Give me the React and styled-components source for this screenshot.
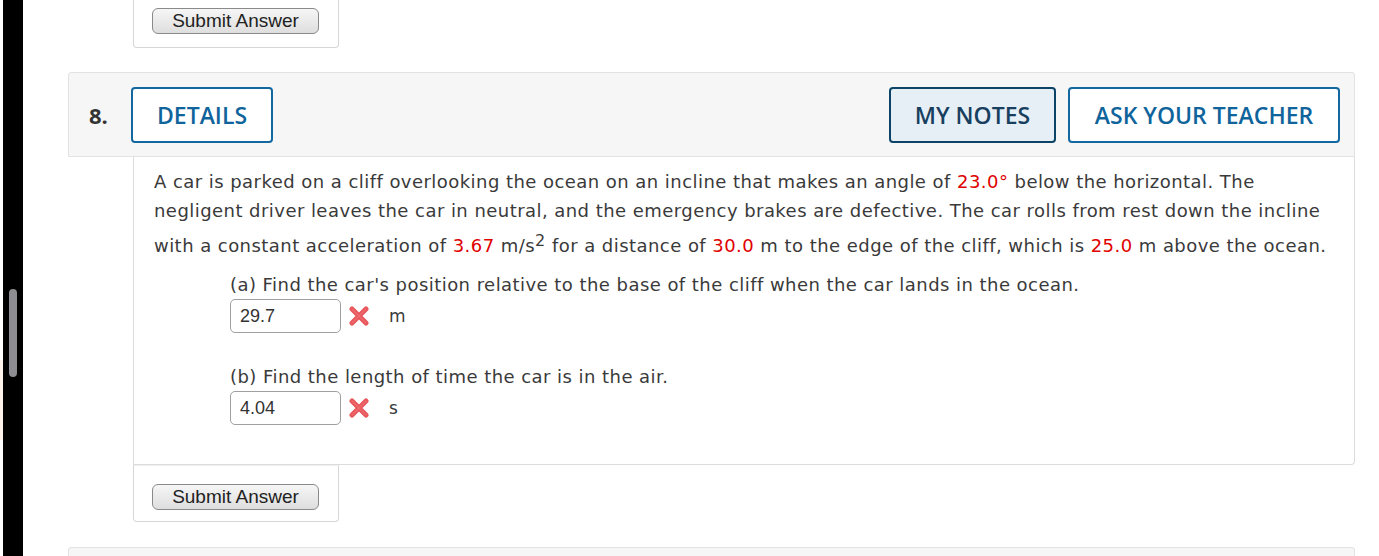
import React from "react";
import styled, { createGlobalStyle } from "styled-components";

const Global = createGlobalStyle`
  html, body { margin: 0; padding: 0; background: #fff; }
  body { overflow: hidden; }
`;

const Page = styled.div`
  display: flex;
  height: 556px;
  overflow: hidden;
`;

const Edge = styled.div`
  width: 3px;
  flex: none;
  background: linear-gradient(#fff 0, #fff 360px, #fdf3ea 360px, #fdf3ea 440px, #fff 440px);
`;

const Strip = styled.div`
  width: 20px;
  flex: none;
  background: #000;
  display: flex;
  flex-direction: column;
  align-items: center;
  padding-top: 289px;
  box-sizing: border-box;
`;

const Thumb = styled.div`
  width: 8px;
  height: 88px;
  border-radius: 4px;
  background: #8e8d92;
`;

const Main = styled.div`
  flex: 1;
  padding-left: 45px;
  padding-right: 24px;
  display: flex;
  flex-direction: column;
`;

const Inset = styled.div`
  padding-left: 65px;
`;

const SubmitCard = styled.div`
  width: 206px;
  box-sizing: border-box;
  border: 1px solid #d6d6d6;
  border-top: ${(p) => (p.$top ? "1px solid #f0f0f0" : "none")};
  border-radius: 0 0 4px 4px;
  padding: ${(p) => (p.$top ? "18px 0 11px 18px" : "8px 0 13px 18px")};
  background: #fff;
`;

const SubmitButton = styled.button`
  width: 167px;
  height: 26px;
  box-sizing: border-box;
  border: 1px solid #8a8a8a;
  border-radius: 6px;
  background: linear-gradient(#f6f6f6, #dedede);
  font-family: "Liberation Sans", Arial, sans-serif;
  font-size: 19px;
  color: #222;
  padding: 0;
  line-height: 22px;
`;

const Question = styled.div`
  margin-top: 24px;
`;

const Header = styled.div`
  display: flex;
  align-items: center;
  background: #f6f6f6;
  border: 1px solid #e2e2e2;
  border-radius: 3px 3px 0 0;
  padding: 14px 14px 13px 20px;
`;

const Number = styled.div`
  font-family: "Open Sans", sans-serif;
  font-weight: 700;
  font-size: 22px;
  color: #333;
  width: 42px;
`;

const HeadButton = styled.div`
  height: 56px;
  box-sizing: border-box;
  display: flex;
  align-items: center;
  justify-content: center;
  border: 2px solid ${(p) => (p.$active ? "#0b4466" : "#1368a0")};
  border-radius: 4px;
  background: ${(p) => (p.$active ? "#e6eff5" : "#fff")};
  color: ${(p) => (p.$active ? "#183f5f" : "#0f649c")};
  font-family: "Open Sans", sans-serif;
  font-weight: 600;
  font-size: 23px;
  margin-left: ${(p) => p.$ml || 0}px;
  width: ${(p) => p.$w}px;
`;

const Spacer = styled.div`
  flex: 1;
`;

const Body = styled.div`
  margin-left: 65px;
  border-left: 1px solid #dcdcdc;
  border-right: 1px solid #dcdcdc;
  border-bottom: 1px solid #dcdcdc;
  border-radius: 0 0 4px 0;
  padding: 10px 10px 39px 20px;
  color: #3a3a3a;
  font-family: "DejaVu Sans", Verdana, sans-serif;
  font-size: 18px;
  letter-spacing: 0.45px;
`;

const Para = styled.p`
  margin: 0;
  line-height: 29px;
`;

const Red = styled.span`
  color: #e00000;
`;

const Sup = styled.sup`
  font-size: 16px;
  line-height: 32px;
  vertical-align: 6px;
`;

const Part = styled.div`
  margin-left: 76px;
  margin-top: ${(p) => p.$mt}px;
`;

const PartText = styled.div`
  line-height: 24px;
`;

const AnswerRow = styled.div`
  display: flex;
  align-items: center;
  margin-top: 2px;
`;

const Input = styled.div`
  width: 111px;
  height: 34px;
  box-sizing: border-box;
  border: 1px solid #a0a0a0;
  border-radius: 5px;
  padding-left: 9px;
  display: flex;
  align-items: center;
  font-family: "Liberation Sans", Arial, sans-serif;
  font-size: 18px;
  letter-spacing: 0;
  color: #333;
`;

const Unit = styled.span`
  margin-left: 19px;
  font-size: 17px;
  color: #3a3a3a;
`;

const XIcon = styled.svg`
  margin-left: 7px;
  flex: none;
`;

const Next = styled.div`
  margin-top: 25px;
  height: 20px;
  background: #f6f6f6;
  border: 1px solid #e2e2e2;
  border-radius: 3px 3px 0 0;
`;

function Cross() {
  return (
    <XIcon width="22" height="20" viewBox="0 0 22 20">
      <path d="M4 3 L18 17 M18 3 L4 17" stroke="#e8555a" strokeWidth="5" strokeLinecap="round" />
      <path d="M4 3 L18 17 M18 3 L4 17" stroke="#f07a7e" strokeWidth="1.5" strokeLinecap="round" opacity="0.6" />
    </XIcon>
  );
}

export default function App() {
  return (
    <Page>
      <Global />
      <Edge />
      <Strip>
        <Thumb />
      </Strip>
      <Main>
        <Inset>
          <SubmitCard>
            <SubmitButton>Submit Answer</SubmitButton>
          </SubmitCard>
        </Inset>
        <Question>
          <Header>
            <Number>8.</Number>
            <HeadButton $w={142}>DETAILS</HeadButton>
            <Spacer />
            <HeadButton $active $w={167}>MY NOTES</HeadButton>
            <HeadButton $ml={12} $w={272}>ASK YOUR TEACHER</HeadButton>
          </Header>
          <Body>
            <Para>
              A car is parked on a cliff overlooking the ocean on an incline that makes an angle of <Red>23.0°</Red> below the horizontal. The negligent driver leaves the car in neutral, and the emergency brakes are defective. The car rolls from rest down the incline with a constant acceleration of <Red>3.67</Red> m/s<Sup>2</Sup> for a distance of <Red>30.0</Red> m to the edge of the cliff, which is <Red>25.0</Red> m above the ocean.
            </Para>
            <Part $mt={13}>
              <PartText>(a) Find the car's position relative to the base of the cliff when the car lands in the ocean.</PartText>
              <AnswerRow>
                <Input>29.7</Input>
                <Cross />
                <Unit>m</Unit>
              </AnswerRow>
            </Part>
            <Part $mt={32}>
              <PartText>(b) Find the length of time the car is in the air.</PartText>
              <AnswerRow>
                <Input>4.04</Input>
                <Cross />
                <Unit>s</Unit>
              </AnswerRow>
            </Part>
          </Body>
          <Inset>
            <SubmitCard $top>
              <SubmitButton>Submit Answer</SubmitButton>
            </SubmitCard>
          </Inset>
          <Next />
        </Question>
      </Main>
    </Page>
  );
}
